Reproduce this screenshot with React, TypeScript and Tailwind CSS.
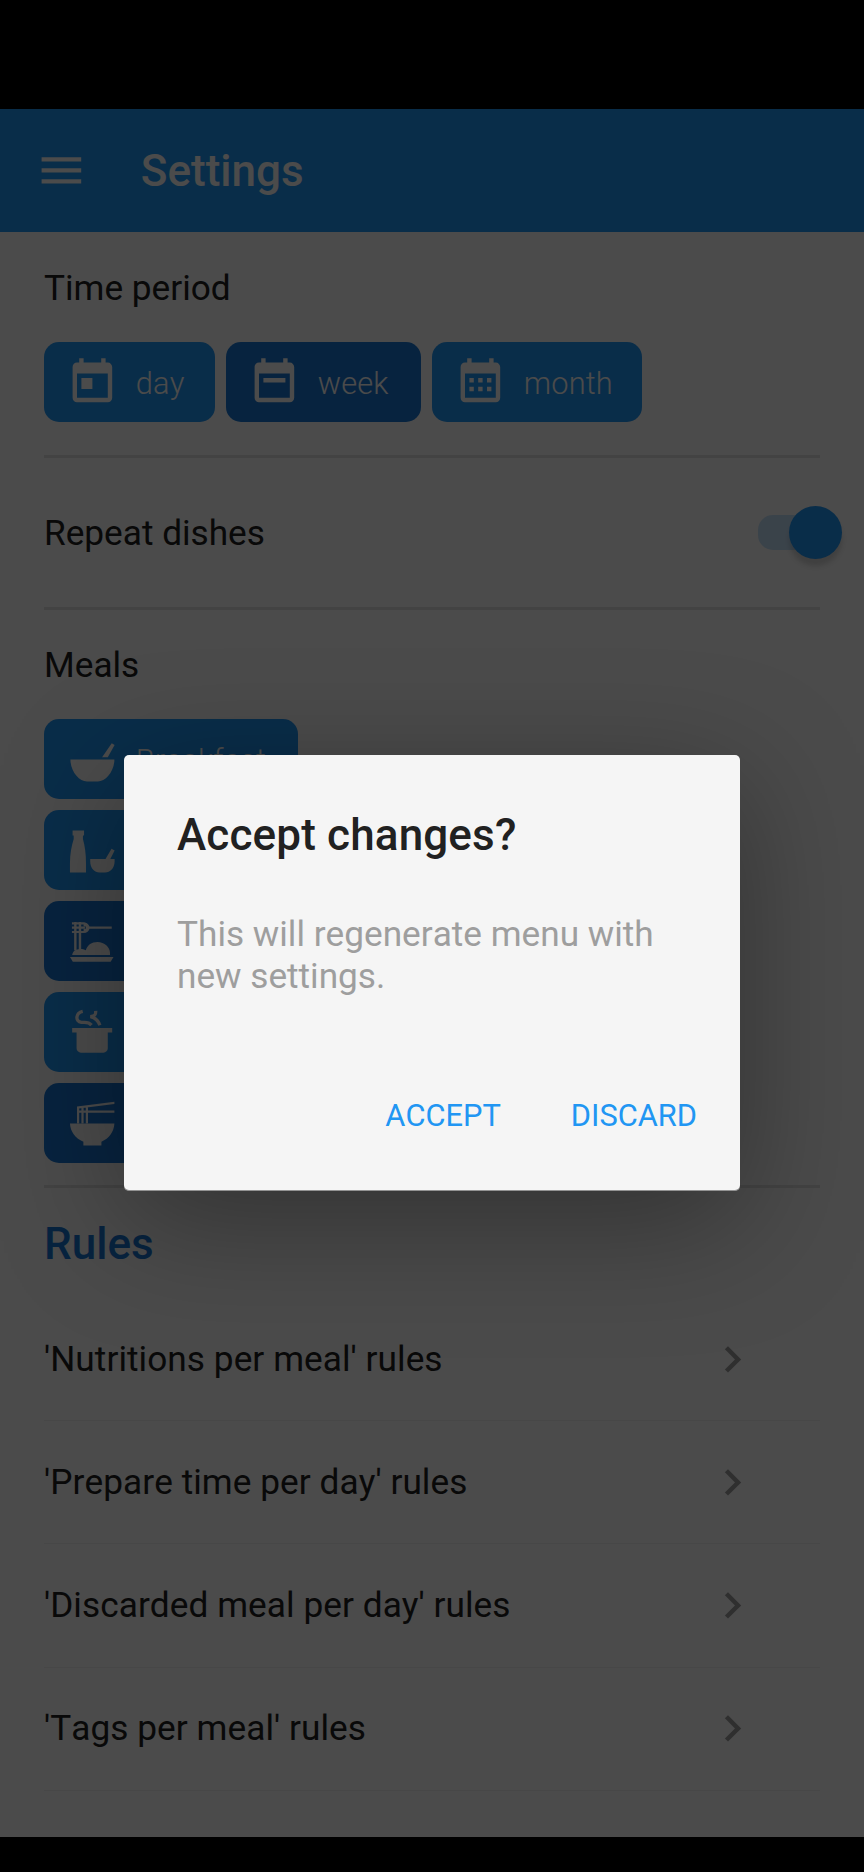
import type { ReactNode } from "react";

function Icon({ children }: { children: ReactNode }) {
  return (
    <svg viewBox="0 0 24 24" className="h-[52.8px] w-[52.8px] shrink-0" fill="currentColor">
      {children}
    </svg>
  );
}

const CALENDAR =
  "M19,19H5V8H19M19,3H18V1H16V3H8V1H6V3H5C3.89,3 3,3.9 3,5V19A2,2 0 0,0 5,21H19A2,2 0 0,0 21,19V5A2,2 0 0,0 19,3Z";

const icons = {
  day: <path d={"M7,10H12V15H7" + CALENDAR} />,
  week: <path d={"M7,10H17V12H7" + CALENDAR} />,
  month: (
    <path
      d={
        "M7,10H9V12H7V10M11,10H13V12H11V10M15,10H17V12H15V10M7,14H9V16H7V14M11,14H13V16H11V14M15,14H17V16H15V14" +
        CALENDAR
      }
    />
  ),
  mixingBowl: <path d="M2 12H22C22 17.5 18 22 14.5 22H9.5C6 22 2 17.5 2 12ZM20.8 4.7L22.1 5.5L19 11H16.4Z" />,
  bottle: (
    <path d="M3 3H8.2V5.2H7.7V6.8C8.6 10 9.1 13.5 9.1 18V22H1.8V18C1.8 13.5 2.5 10 3.5 6.8V5.2H3ZM11 15.9H22.1V17C22.1 20 20 22 17.8 22H15.2C13 22 11 20 11 17ZM20.7 11.2L22.1 12L20.1 16H17.9Z" />
  ),
  pasta: (
    <>
      <path d="M1.8 19.1H21.6L20.3 21.3H3.1ZM2.8 18.2C3 17 3.6 16.2 4.6 15.8C6 15.3 7.8 15.4 9 16C9.8 13.6 11.6 12.3 14.3 12.3C17.5 12.3 20 14.7 20 17.2V18.2Z" />
      <path d="M3.7 3.2H4.8V16H3.7ZM5.8 3.2H6.9V16H5.8ZM10 5.2H20.8V6.3H10Z" />
      <path d="M2.7 3.8H7.9C9.2 3.8 9.8 4.8 9.8 5.75S9.2 7.7 7.9 7.7H2.7M2.7 5.75H8.6" fill="none" stroke="currentColor" strokeWidth="0.95" />
      <path d="M8 3.4C9.8 3.4 10.7 4.7 10.7 5.75S9.8 8.1 8 8.1V6.3H9V5.2H8Z" />
    </>
  ),
  pot: (
    <>
      <path d="M2.8 10H21V12.1H19V19.2A2 2 0 0 1 17 21.2H6.8A2 2 0 0 1 4.8 19.2V12.1H2.8Z" />
      <path
        d="M7.6 2.4C4.4 3.1 4 7 7 7.4C8.8 7.6 10.2 7 11.6 8.7M13.5 2.2C13.6 4.2 13 4.5 11.1 4.8C13.7 5.4 14.7 6.6 15.4 8.8"
        fill="none"
        stroke="currentColor"
        strokeWidth="1.5"
      />
    </>
  ),
  noodles: (
    <>
      <path d="M1.8 12H22C21.8 15.8 19.6 18.8 16.1 20.3V22H7.9V20.3C4.3 18.8 2 15.8 1.8 12Z" />
      <path d="M5 4.3L22 2.2V3.2L5 5.3ZM5 6.1H22V7.2H5ZM5 4.4H6V12H5ZM7 4.2H8V12H7ZM9 4H10V12H9Z" />
    </>
  ),
};

function Chip({ icon, label, selected, className = "" }: { icon: ReactNode; label?: string; selected?: boolean; className?: string }) {
  return (
    <button
      className={`flex h-20 items-center gap-[17px] rounded-[15px] pl-[22px] text-[30.8px] font-light tracking-[0.15px] text-[#fafafa] ${
        selected ? "bg-[#1976d2]" : "bg-[#2196f3]"
      } ${className}`}
    >
      <Icon>{icon}</Icon>
      {label && <span className="pt-0.5">{label}</span>}
    </button>
  );
}

const rules = [
  "'Nutritions per meal' rules",
  "'Prepare time per day' rules",
  "'Discarded meal per day' rules",
  "'Tags per meal' rules",
];

export default function App() {
  return (
    <div className="relative flex h-[1872px] w-[864px] flex-col overflow-hidden bg-black font-['Roboto',sans-serif] text-[35.2px] leading-[41px] text-[#212121] [font-kerning:none]">
      <div className="h-[109px] shrink-0" />
      <header className="flex h-[123px] shrink-0 items-center bg-[#2196f3] pl-[35px] text-[#fafafa]">
        <Icon>
          <path d="M3,6H21V8H3V6M3,11H21V13H3V11M3,16H21V18H3V16Z" />
        </Icon>
        <h1 className="ml-[53px] pt-0.5 text-[44px] font-medium">Settings</h1>
      </header>

      <main className="flex h-[1604.5px] shrink-0 flex-col bg-[#fafafa] px-11">
        <section className="flex h-[226px] shrink-0 flex-col border-b-[3px] border-[#e0e0e0] pt-[36px]">
          <h2>Time period</h2>
          <div className="mt-[33px] flex gap-[11px]">
            <Chip icon={icons.day} label="day" className="w-[171px]" />
            <Chip icon={icons.week} label="week" selected className="w-[195px]" />
            <Chip icon={icons.month} label="month" className="w-[210px]" />
          </div>
        </section>

        <section className="flex h-[152px] shrink-0 items-center justify-between border-b-[3px] border-[#e0e0e0]">
          <span className="pt-0.5">Repeat dishes</span>
          <div className="-mr-[22px] flex h-[53px] w-[84px] items-center rounded-full">
            <div className="h-[35px] w-[70px] rounded-[15px] bg-[#c4e0f8]" />
            <div className="-ml-[39px] h-[53px] w-[53px] shrink-0 rounded-full bg-[#2196f3] shadow-[0_7px_5px_rgba(0,0,0,0.15)]" />
          </div>
        </section>

        <section className="flex h-[578px] shrink-0 flex-col border-b-[3px] border-[#e0e0e0] pt-[35px]">
          <h2>Meals</h2>
          <div className="mt-[33px] flex flex-col gap-[11px]">
            <Chip icon={icons.mixingBowl} label="Breakfast" className="w-[254px]" />
            <Chip icon={icons.bottle} className="w-[254px]" />
            <Chip icon={icons.pasta} selected className="w-[254px]" />
            <Chip icon={icons.pot} className="w-[254px]" />
            <Chip icon={icons.noodles} selected className="w-[254px]" />
          </div>
        </section>

        <h2 className="mt-[31px] h-[51px] text-[44px] leading-[51px] font-medium text-[#1976d2]">Rules</h2>
        <ul className="mt-[28px] tracking-[0.06px]">
          {rules.map((rule) => (
            <li key={rule} className="flex h-[123.2px] items-center justify-between border-b border-[#eeeeee] pr-[61px]">
              <span>{rule}</span>
              <span className="flex text-[#9e9e9e]">
                <Icon>
                  <path d="M8.59,16.58L13.17,12L8.59,7.41L10,6L16,12L10,18L8.59,16.58Z" />
                </Icon>
              </span>
            </li>
          ))}
        </ul>
      </main>

      <div className="absolute inset-0 flex items-start justify-center bg-black/70 pt-[755px]">
        <div
          role="dialog"
          className="flex h-[436px] w-[616px] flex-col rounded-[5px] bg-[#f5f5f5] px-[53px] pt-[55px] shadow-[0_30px_125px_rgba(0,0,0,0.34),inset_0_-1px_0_rgba(0,0,0,0.4)]"
        >
          <h2 className="text-[44px] leading-[51px] font-medium tracking-[0.15px]">Accept changes?</h2>
          <p className="mt-[53px] leading-[41.5px] text-[#9e9e9e]">
            This will regenerate menu with
            <br />
            new settings.
          </p>
          <div className="-mr-[10px] mt-[101px] flex justify-end gap-[70px] text-[30.8px] leading-[36px] text-[#2196f3]">
            <button>ACCEPT</button>
            <button>DISCARD</button>
          </div>
        </div>
      </div>
    </div>
  );
}
